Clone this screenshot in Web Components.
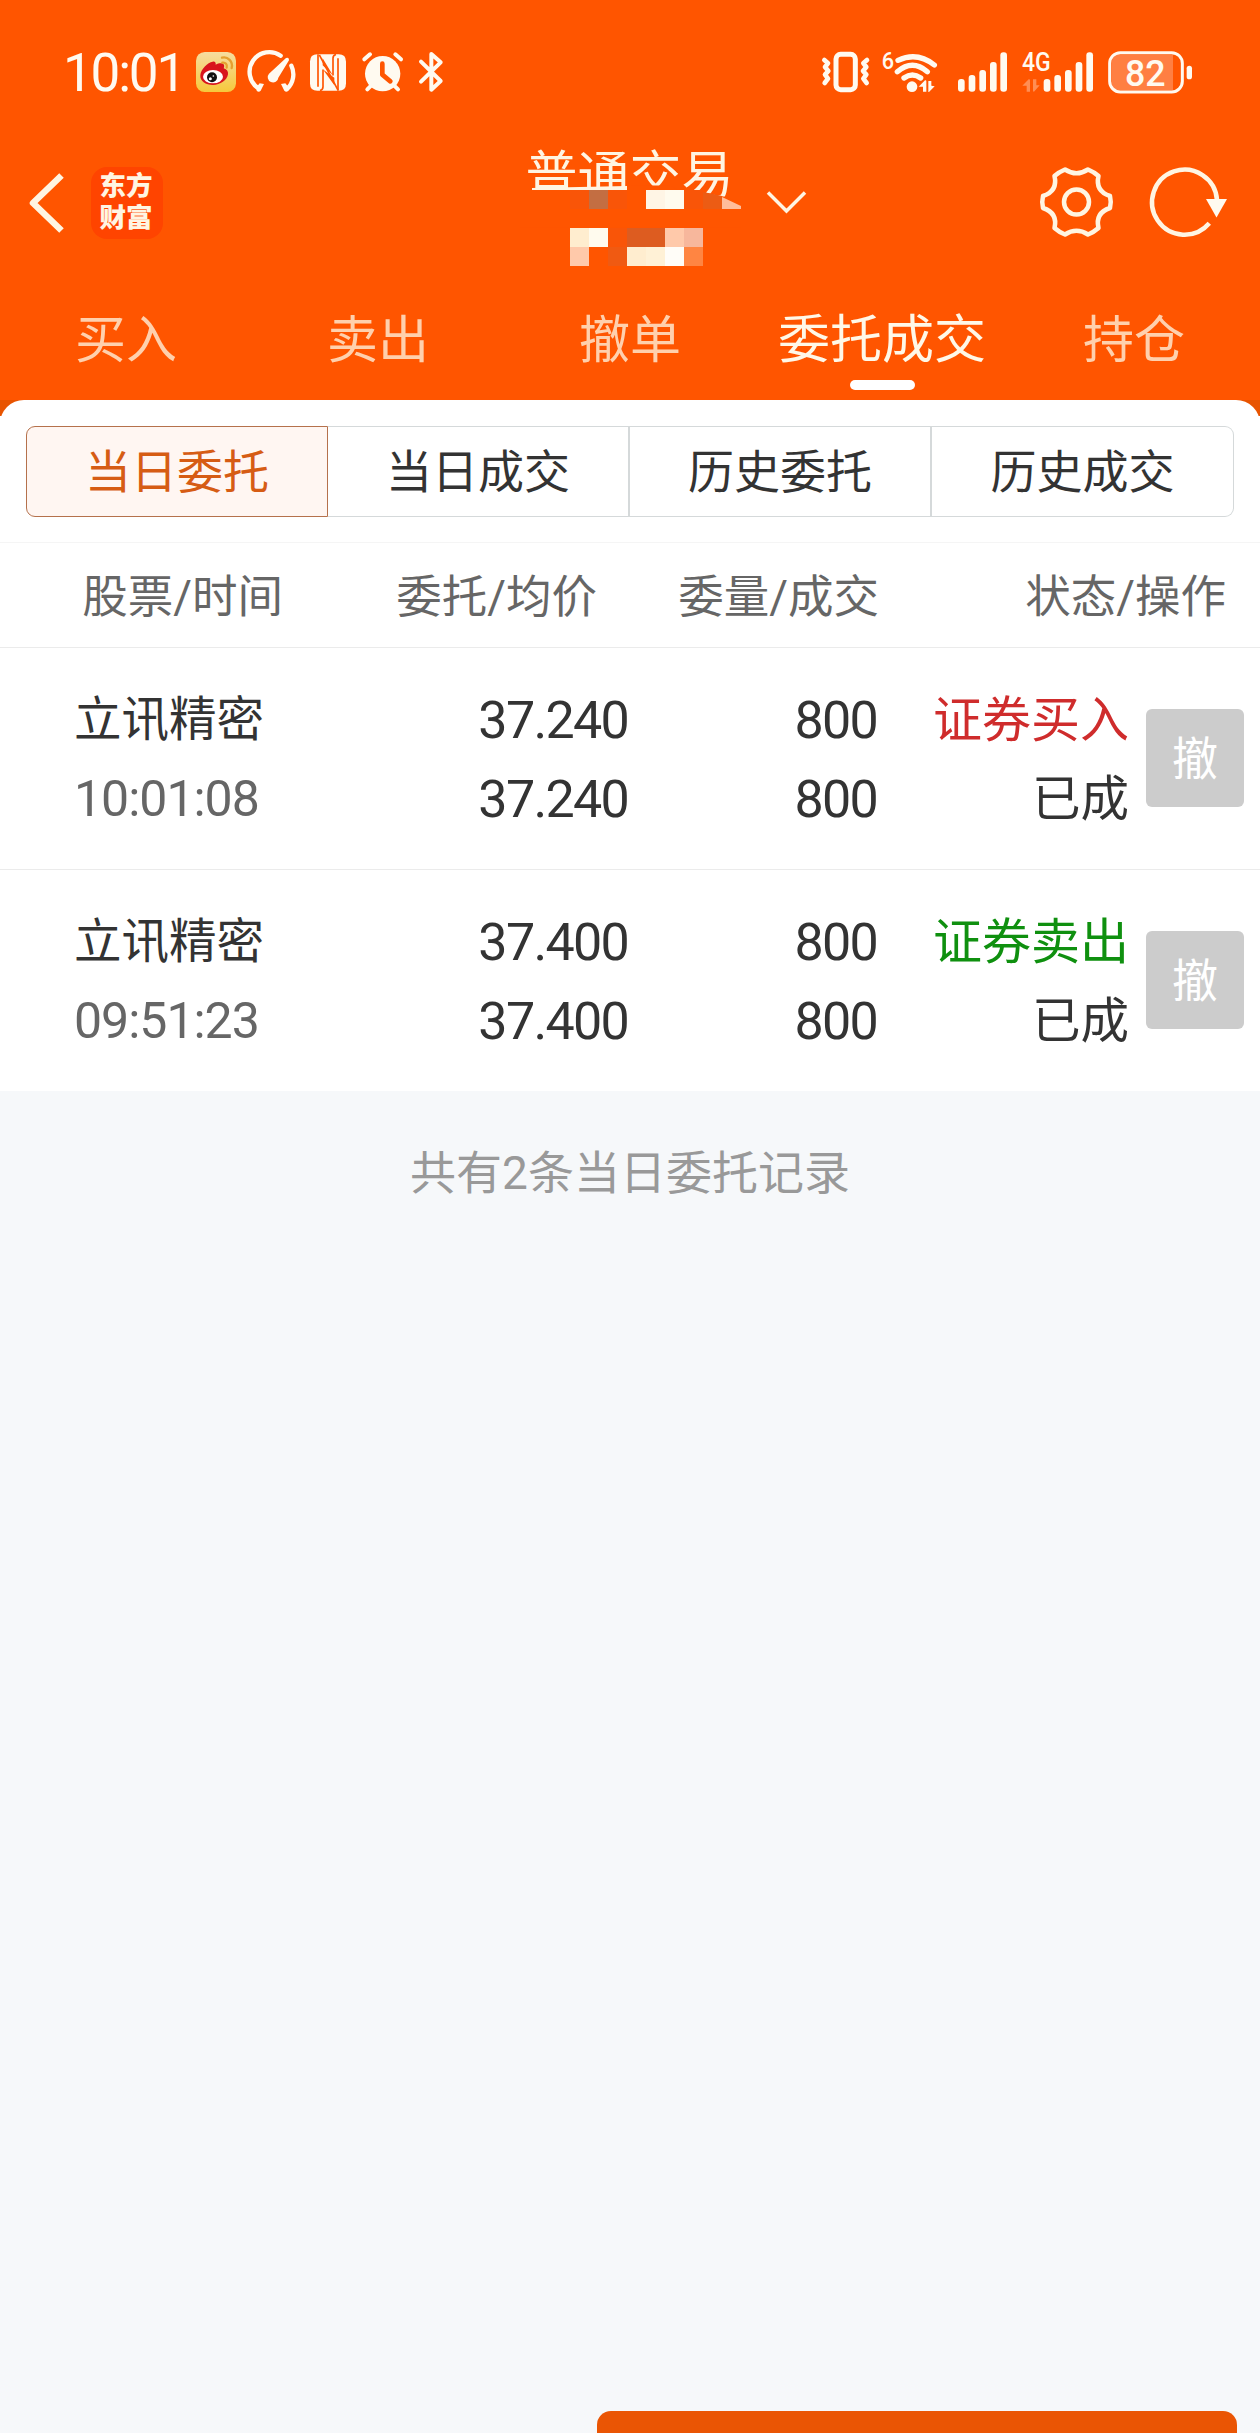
<!DOCTYPE html>
<html lang="zh-CN">
<head>
<meta charset="UTF-8">
<meta name="viewport" content="width=device-width">
<title>普通交易</title>
<style>
  body {
    margin: 0;
    background: #f6f8fa;
    font-family: Roboto, "Noto Sans CJK SC", sans-serif;
    overflow: hidden;
  }
</style>
</head>
<body>
<trade-page></trade-page>

<script>
/**
 * 状态栏：时间、通知图标、信号和电量
 * @element status-bar
 */
class StatusBar extends HTMLElement {
  constructor() {
    super();
    this.attachShadow({ mode: "open" });
  }

  connectedCallback() {
    this._render();
  }

  _render() {
    const styles = `
      :host {
        display: flex;
        justify-content: space-between;
        align-items: center;
        height: 84px;
        padding: 30px 68px 0 63px;
        color: #fffaf0;
      }
      .group { display: flex; align-items: center; }
      .time { font-size: 53px; line-height: 60px; letter-spacing: -2.200px; width: 133px; padding-top: 2px; }
      svg { display: block; fill: #fffaf0; overflow: visible; }
      .line { fill: none; stroke: #fffaf0; stroke-linecap: round; stroke-linejoin: round; }
    `;

    this.shadowRoot.innerHTML = `
      <style>${styles}</style>
      <div class="group">
        <span class="time">10:01</span>
        <svg width="40" height="40" viewBox="468 66 120 120">
          <defs><linearGradient id="g" x1="0" y1="0" x2="0" y2="1"><stop offset="0" stop-color="#f6dda0"/><stop offset="1" stop-color="#f6c83c"/></linearGradient></defs>
          <rect x="468" y="66" width="120" height="120" rx="26" fill="url(#g)"/>
          <path d="M481 135c2-18 22-38 37-40 8-1 10 4 9 9 10-5 23-6 25 1 1 4 0 8-1 10 10 3 14 9 13 18-3 18-23 32-45 32-22 0-40-12-38-30Z" fill="#d8141c"/>
          <ellipse cx="519" cy="140" rx="30" ry="20" fill="#fff"/>
          <circle cx="516" cy="142" r="15" fill="#111"/>
          <circle cx="511" cy="146" r="4.5" fill="#fff"/><circle cx="520" cy="138" r="2.5" fill="#fff"/>
          <path d="M546 83c17-5 34 12 29 31M547 98c9-2 16 6 13 15" fill="none" stroke="#e5a030" stroke-width="7" stroke-linecap="round"/>
        </svg>
        <svg width="45" height="40" viewBox="628 66 135 120" style="margin-left:14px">
          <path class="line" stroke-width="13" d="M720 77a59 59 0 0 0-68 97M752 107a60 60 0 0 1-12 69"/>
          <path d="M647 172l10-12 13 2-10 20q-6 6-12 0ZM744 172l-10-12-13 2 10 20q6 6 12 0Z"/>
          <path d="M736 84q10-4 9 7L713 143a16 16 0 1 1-28-12Z"/>
        </svg>
        <svg width="36" height="37" viewBox="810 72 108 110" style="margin-left:15px">
          <path fill-rule="evenodd" d="M832 72h64q22 0 22 22v66q0 22-22 22h-64q-22 0-22-22V94q0-22 22-22Z"/>
          <path d="M834 72v98M894 84v98" stroke="#ff5500" stroke-width="5" fill="none"/>
          <path d="M838 74l56 106M849 118v52q0 9-9 11M879 136V84q0-9 9-11" stroke="#ff5500" stroke-width="5" fill="none"/>
          <path d="M849 118l34 25v22ZM879 136l-31-31V84Z" fill="#ff5500"/>
        </svg>
        <svg width="41" height="40" viewBox="966 66 123 120" style="margin-left:16px">
          <circle cx="1028" cy="131" r="53"/>
          <path class="line" stroke-width="12" d="M973 88l17-15M1083 88l-17-15M982 178l12-12M1074 178l-12-12"/>
          <path d="M1027 101v33l24 20" fill="none" stroke="#ff5500" stroke-width="14" stroke-linecap="round" stroke-linejoin="round"/>
        </svg>
        <svg width="24" height="40" viewBox="1137 66 72 120" style="margin-left:16px">
          <path class="line" stroke-width="12" d="M1143 95l59 58-28 26V72l28 25-59 58"/>
        </svg>
      </div>
      <div class="group">
        <svg width="48" height="40" viewBox="65 66 144 120">
          <rect class="line" stroke-width="15" x="107" y="73" width="58" height="106" rx="14"/>
          <path class="line" stroke-width="14" d="M72 90l11 10-9 11 10 12-10 11 9 12-10 13M200 90l-11 10 9 11-10 12 10 11-9 12 10 13"/>
        </svg>
        <svg width="55" height="42" viewBox="245 62 165 126" style="margin-left:12px">
          <text x="244" y="117" font-size="74" font-weight="500" textLength="37" lengthAdjust="spacingAndGlyphs">6</text>
          <path class="line" stroke-width="16" d="M293 90q58-27 109 14M291 124q45-38 90 0M311 143q25-18 50 0"/>
          <circle cx="335" cy="169" r="16"/>
          <path d="M355 169l19-19q4-1 4 3v31h-10v-15ZM384 152h9v14l10 2-17 17h-2Z"/>
        </svg>
        <svg width="49" height="40" viewBox="474 66 147 120" style="margin-left:21px">
          <rect x="474" y="147" width="20" height="38" rx="9"/><rect x="506" y="135" width="20" height="50" rx="9"/><rect x="538" y="120" width="20" height="65" rx="9"/><rect x="570" y="96" width="20" height="89" rx="9"/><rect x="601" y="67" width="20" height="118" rx="9"/>
        </svg>
        <svg width="71" height="40" viewBox="667 66 213 120" style="margin-left:15px">
          <text x="667" y="124" font-size="78" font-weight="500" textLength="86" lengthAdjust="spacingAndGlyphs">4G</text>
          <path d="M668 167l19-19q4-1 4 3v34h-10v-18ZM700 148h10v18h10l-17 19q-3 0-3-3Z" opacity=".35"/>
          <rect x="732" y="147" width="20" height="38" rx="9"/><rect x="764" y="135" width="20" height="50" rx="9"/><rect x="796" y="120" width="20" height="65" rx="9"/><rect x="828" y="96" width="20" height="89" rx="9"/><rect x="860" y="67" width="20" height="118" rx="9"/>
        </svg>
        <svg width="84" height="43" viewBox="925 62 252 129" style="margin-left:15px">
          <path d="M960 73h160v107h-160q-24 0-24-24V97q0-24 24-24Z" fill="#ff7f42"/>
          <rect class="line" stroke-width="9" x="930" y="67" width="218" height="118" rx="32"/>
          <rect x="1161" y="106" width="16" height="41" rx="8"/>
          <text x="976" y="167" font-size="112" font-weight="500" textLength="122" lengthAdjust="spacingAndGlyphs">82</text>
        </svg>
      </div>
    `;
  }
}

/**
 * 顶部导航：返回、标志、账户选择、设置和刷新
 * @element nav-bar
 */
class NavBar extends HTMLElement {
  constructor() {
    super();
    this.attachShadow({ mode: "open" });
  }

  connectedCallback() {
    this._render();
  }

  _render() {
    const styles = `
      :host {
        display: grid;
        grid-template-columns: 1fr auto 1fr;
        align-items: center;
        height: 176px;
        color: #fff5e2;
      }
      svg { display: block; fill: none; stroke: #fff5e2; overflow: visible; }
      .left { display: flex; align-items: center; padding: 2px 0 0 28px; }
      .logo {
        display: grid;
        place-content: center;
        box-sizing: border-box;
        width: 72px;
        height: 72px;
        margin-left: 26px;
        padding: 0 2px 2px 0;
        border-radius: 16px;
        background: #ff4400;
        font-weight: 900;
        font-size: 26.500px;
        line-height: 32px;
      }
      .account { position: relative; width: 208px; height: 176px; }
      .title { display: block; margin: 33px 0 0 -1px; text-align: center; font-size: 52px; line-height: 60px; white-space: nowrap; }
      .mosaic { position: absolute; left: -6px; top: 64px; stroke: none; }
      .arrow { position: absolute; left: 241px; top: 77px; }
      .right { display: flex; align-items: center; justify-content: flex-end; gap: 37px; padding-right: 33px; }
    `;

    this.shadowRoot.innerHTML = `
      <style>${styles}</style>
      <div class="left">
        <svg width="37" height="60" viewBox="28 173 37 60" stroke-width="6.5"><path d="M61.5 175.500L33 203l28.500 27.500" stroke-linejoin="round"/></svg>
        <div class="logo"><span>东方</span><span>财富</span></div>
      </div>
      <div class="account">
        <span class="title"><slot></slot></span>
        <svg class="mosaic" width="221" height="90" viewBox="520 178 221 90">
          <path fill="#ff5500" d="M520 190h107l5-4.500h38l9 5 22 1 27 6 13 7v23H520Z"/>
          <path fill="#fff5e2" d="M532 188l95-2v4h-95Z"/>
          <path fill="#f95508" d="M570 190h57v19h-57ZM684 190h19v19h-19Z"/>
          <path fill="#c36e42" d="M589 190h19v19h-19Z"/>
          <path fill="#fff5e5" d="M646 190h19v19h-19Z"/><path fill="#fffbee" d="M665 190h19v19h-19Z"/>
          <path fill="#ec5c14" d="M703 192l19 4v13h-19Z"/><path fill="#ffbd9b" d="M722 197l19 9v3h-19Z"/>
          <path fill="#ffedcf" d="M570 228h19v19h-19ZM627 247h19v19h-19Z"/><path fill="#fffbee" d="M589 228h19v19h-19Z"/>
          <path fill="#f95508" d="M608 228h19v19h-19Z"/><path fill="#dd5c20" d="M627 228h38v19h-38Z"/>
          <path fill="#ffc9aa" d="M665 228h19v19h-19ZM570 247h19v19h-19Z"/><path fill="#f7b79c" d="M684 228h19v19h-19Z"/>
          <path fill="#f05a12" d="M608 247h19v19h-19Z"/><path fill="#fff1d6" d="M646 247h19v19h-19Z"/>
          <path fill="#fffdf8" d="M665 247h19v19h-19Z"/><path fill="#ff8542" d="M684 247h19v19h-19Z"/>
        </svg>
        <svg class="arrow" width="39" height="22" viewBox="0 0 39 22" stroke-width="3.500"><path d="M1 1.500l18.500 18.500L38 1.500"/></svg>
      </div>
      <div class="right">
        <svg width="73" height="74" viewBox="0 0 73 74" stroke-width="4.500" stroke-linejoin="round">
          <path d="M25 4.500Q36.500 12 48 4.500Q54 7 58.500 11Q55 26 70 31Q71.500 37 70 43Q55 48 58.500 63Q54 67 48 69.500Q36.500 62 25 69.500Q19 67 14.500 63Q18 48 3 43Q1.500 37 3 31Q18 26 14.500 11Q19 7 25 4.500Z"/>
          <circle cx="36.500" cy="37" r="12.500"/>
        </svg>
        <svg width="77" height="70" viewBox="1150 168 77 70" stroke-width="4.500">
          <path d="M1217 201A32.500 32.500 0 1 0 1209.300 224.300"/>
          <path d="M1206 200h21l-10.500 18.500Z" fill="#fffaf0" stroke="none"/>
        </svg>
      </div>
    `;
  }
}

/**
 * 主标签
 * @element main-tab
 * @attr {boolean} active - 当前选中
 */
class MainTab extends HTMLElement {
  constructor() {
    super();
    this.attachShadow({ mode: "open" });
  }

  connectedCallback() {
    this.shadowRoot.innerHTML = `
      <style>
        :host {
          flex: 1;
          display: flex;
          flex-direction: column;
          align-items: center;
          color: #ffd0ad;
          font-size: 51px;
          line-height: 60px;
          white-space: nowrap;
        }
        :host([active]) { color: #fff8e8; font-size: 52px; }
        :host([active])::after {
          content: "";
          width: 65px;
          height: 10px;
          margin-top: 9px;
          border-radius: 5px;
          background: #fff;
        }
      </style>
      <slot></slot>
    `;
  }
}

/**
 * 分段按钮
 * @element segment-item
 * @attr {boolean} active - 当前选中
 */
class SegmentItem extends HTMLElement {
  constructor() {
    super();
    this.attachShadow({ mode: "open" });
  }

  connectedCallback() {
    this.shadowRoot.innerHTML = `
      <style>
        :host {
          flex: 0 0 302px;
          box-sizing: border-box;
          height: 91px;
          border: 1px solid #d5d9da;
          border-left-width: 0;
          border-right-width: 2px;
          color: #333;
          font-size: 46px;
          line-height: 91px;
          text-align: center;
        }
        :host(:last-child) { border-right-width: 1px; border-radius: 0 9px 9px 0; }
        :host([active]) {
          border: 1px solid #b5714c;
          border-radius: 9px 0 0 9px;
          background: #fff6f2;
          color: #d65c14;
        }
      </style>
      <slot></slot>
    `;
  }
}

/**
 * 委托记录行
 * @element order-row
 * @attr {string} name - 股票名称
 * @attr {string} time - 委托时间
 * @attr {string} price - 委托价
 * @attr {string} avg - 成交均价
 * @attr {string} amount - 委托数量
 * @attr {string} filled - 成交数量
 * @attr {string} side - buy 或 sell
 * @attr {string} state - 状态
 */
class OrderRow extends HTMLElement {
  constructor() {
    super();
    this.attachShadow({ mode: "open" });
  }

  connectedCallback() {
    this._render();
  }

  get side() {
    return this.getAttribute("side") === "buy" ? "证券买入" : "证券卖出";
  }

  _render() {
    const styles = `
      :host {
        display: grid;
        grid-template-columns: 275px 279px 249px 252px 115px;
        box-sizing: border-box;
        height: 222px;
        padding: 33px 0 0 74px;
        border-bottom: 1px solid #ebebeb;
        background: #fff;
        color: #333;
        font-size: 49px;
        line-height: 79px;
        white-space: nowrap;
      }
      :host(:last-of-type) { height: 221px; border-bottom: 0; }
      div { display: flex; flex-direction: column; text-align: right; }
      .stock { text-align: left; font-size: 47.500px; }
      .time { color: #666; font-size: 50px; letter-spacing: -1px; }
      .num { font-size: 52px; letter-spacing: -1.700px; }
      .buy { color: #cf2c2c; }
      .sell { color: #0f900f; }
      .state { font-size: 48.500px; }
      button {
        justify-self: end;
        width: 98px;
        height: 98px;
        margin-top: 28px;
        padding: 0;
        border: 0;
        border-radius: 6px;
        background: #ccc;
        color: #fff;
        font: inherit;
        font-size: 46px;
        line-height: 100px;
      }
    `;

    const attr = (name) => this.getAttribute(name);

    this.shadowRoot.innerHTML = `
      <style>${styles}</style>
      <div class="stock"><span>${attr("name")}</span><span class="time">${attr("time")}</span></div>
      <div class="num"><span>${attr("price")}</span><span>${attr("avg")}</span></div>
      <div class="num"><span>${attr("amount")}</span><span>${attr("filled")}</span></div>
      <div><span class="${attr("side")}">${this.side}</span><span class="state">${attr("state")}</span></div>
      <button>撤</button>
    `;
  }
}

/**
 * 交易页面
 * @element trade-page
 */
class TradePage extends HTMLElement {
  constructor() {
    super();
    this.attachShadow({ mode: "open" });
  }

  connectedCallback() {
    this._render();
  }

  _render() {
    const styles = `
      :host { display: flex; flex-direction: column; width: 1260px; height: 2433px; overflow: hidden; }
      header { height: 400px; background: #ff5500; }
      .tabs { display: flex; padding-top: 21px; }
      .panel { background: linear-gradient(#e85400 16px, #fff 16px); }
      .segments {
        display: flex;
        box-sizing: border-box;
        height: 142px;
        padding: 26px 26px 0;
        border-radius: 24px 24px 0 0;
        background: #fff;
      }
      .columns {
        display: grid;
        grid-template-columns: 314px 283px 282px 347px;
        box-sizing: border-box;
        height: 106px;
        border-top: 1px solid #f5f5f5;
        border-bottom: 1px solid #ebebeb;
        background: #fff;
        color: #666;
        font-size: 45.500px;
        line-height: 109px;
        text-align: right;
      }
      .columns span:first-child { padding-right: 31px; }
      .total { margin: 50px 0 0; color: #999; font-size: 46px; line-height: 64px; text-align: center; }
      .action { height: 22px; margin: auto 23px 0 597px; border-radius: 14px 14px 0 0; background: #ea5504; }
    `;

    this.shadowRoot.innerHTML = `
      <style>${styles}</style>
      <header>
        <status-bar></status-bar>
        <nav-bar>普通交易</nav-bar>
        <nav class="tabs">
          <main-tab>买入</main-tab>
          <main-tab>卖出</main-tab>
          <main-tab>撤单</main-tab>
          <main-tab active>委托成交</main-tab>
          <main-tab>持仓</main-tab>
        </nav>
      </header>
      <section class="panel">
        <div class="segments">
          <segment-item active>当日委托</segment-item>
          <segment-item>当日成交</segment-item>
          <segment-item>历史委托</segment-item>
          <segment-item>历史成交</segment-item>
        </div>
        <div class="columns">
          <span>股票/时间</span><span>委托/均价</span><span>委量/成交</span><span>状态/操作</span>
        </div>
        <order-row name="立讯精密" time="10:01:08" price="37.240" avg="37.240" amount="800" filled="800" side="buy" state="已成"></order-row>
        <order-row name="立讯精密" time="09:51:23" price="37.400" avg="37.400" amount="800" filled="800" side="sell" state="已成"></order-row>
      </section>
      <p class="total">共有2条当日委托记录</p>
      <div class="action"></div>
    `;
  }
}

customElements.define("status-bar", StatusBar);
customElements.define("nav-bar", NavBar);
customElements.define("main-tab", MainTab);
customElements.define("segment-item", SegmentItem);
customElements.define("order-row", OrderRow);
customElements.define("trade-page", TradePage);
</script>
</body>
</html>
